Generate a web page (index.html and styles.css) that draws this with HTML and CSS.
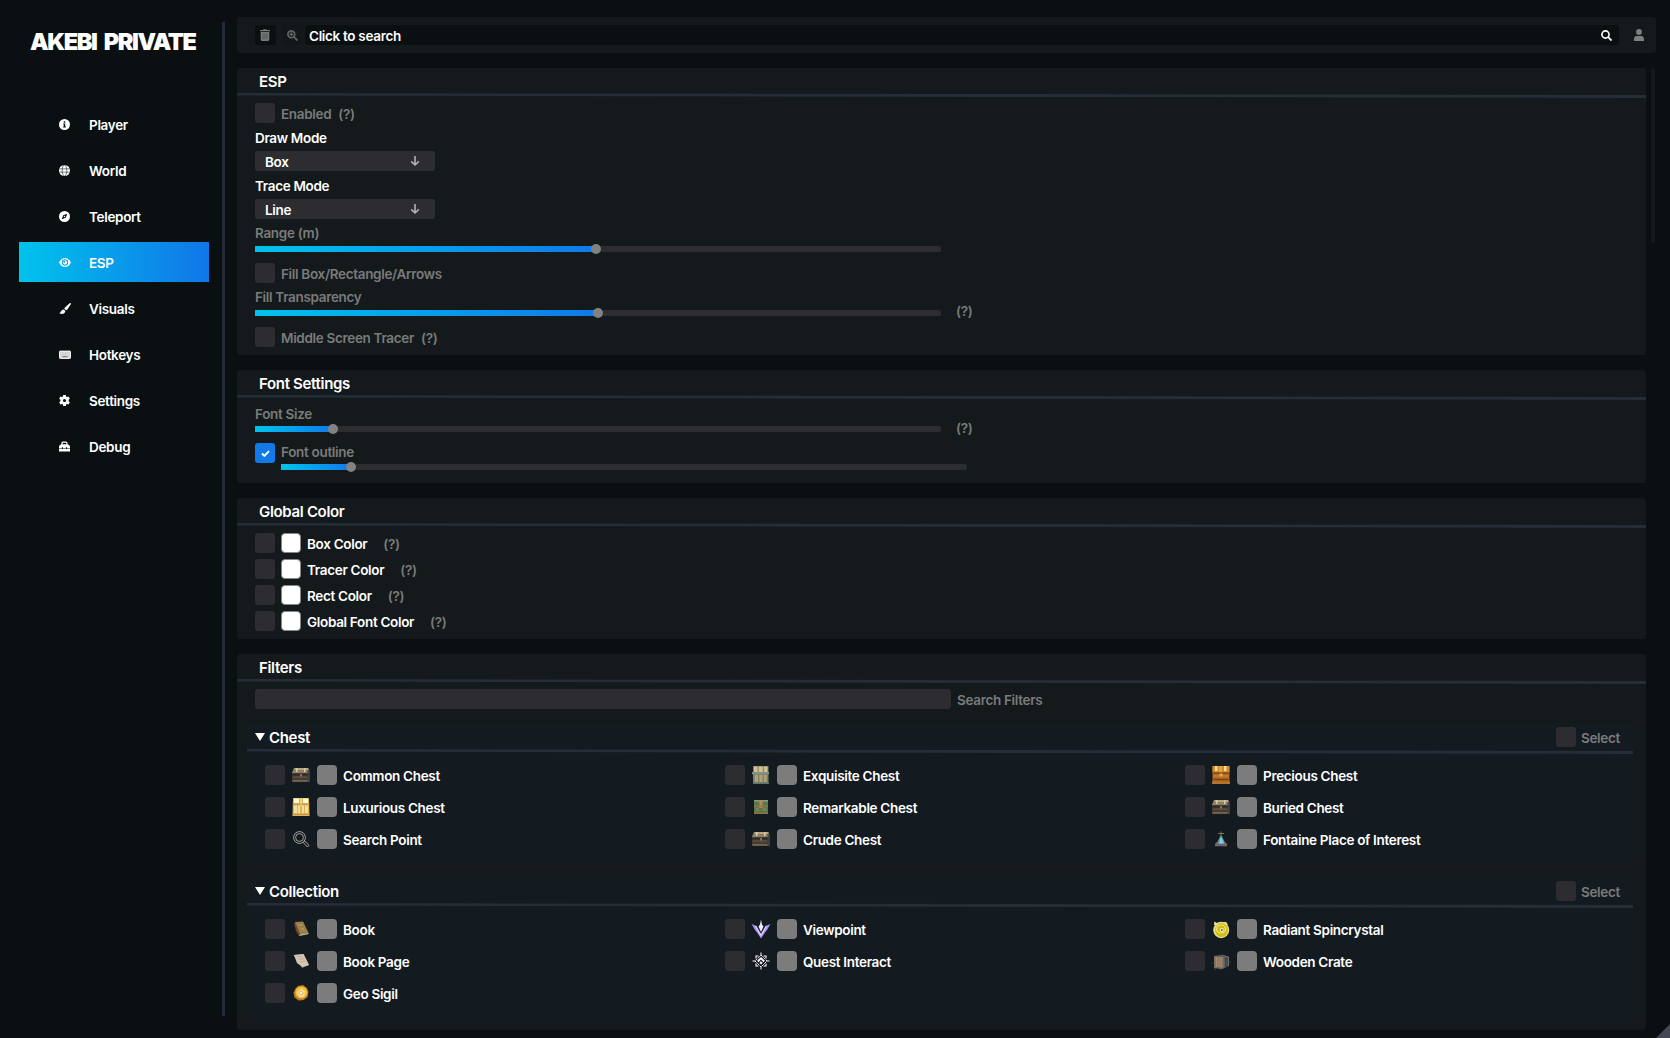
FILE: index.html
```html
<!DOCTYPE html>
<html lang="en">
<head>
<meta charset="utf-8">
<title>Akebi Private</title>
<link rel="stylesheet" href="styles.css">
</head>
<body>
<svg class="defs" width="0" height="0" aria-hidden="true">
  <defs>
    <symbol id="i-chest" viewBox="0 0 20 20">
      <path d="M1 7l2-4h15l1 4v10H1z" fill="#443d34"/>
      <path d="M1 8l2-5h14.500l1 5z" fill="#8f8062"/>
      <path d="M4 3h13v2H3.500z" fill="#b5a684"/>
      <path d="M5 3h1.500v4H5zM13 3h1.500v4H13z" fill="#d8cba9"/>
      <path d="M1 9h18v1.500H1z" fill="#2c2a29"/>
      <path d="M2 11h14v2H2z" fill="#554a3d"/>
      <path d="M1.500 15h16v1.800h-16z" fill="#77644d"/>
      <path d="M9 9h2v2.500H9z" fill="#85745a"/>
      <path d="M16.500 5l2 1 .5 10.500h-2.500z" fill="#3b4144"/>
    </symbol>
    <symbol id="i-down" viewBox="0 0 10 12"><path d="M5 1v9M1.200 6.400L5 10l3.800-3.600" fill="none" stroke="#b4b4b6" stroke-width="1.600"/></symbol>
  </defs>
</svg>
<div class="app">
  <aside class="sidebar">
    <h1 class="brand">AKEBI PRIVATE</h1>
    <nav class="nav">
      <a class="nav-item"><svg viewBox="0 0 12 12"><circle cx="6" cy="6" r="6" fill="#fff"/><path d="M5.200 2.500h1.600V4H5.200zM4.600 5h2.200v3.200h.7V9.300h-3V8.200h.7V6h-.6z" fill="#0a0f11"/></svg><span>Player</span></a>
      <a class="nav-item"><svg viewBox="0 0 12 12"><circle cx="6" cy="6" r="6" fill="#fff"/><path d="M.3 4.200h11.400M.3 7.800h11.400" stroke="#0a0f11" stroke-width=".6"/><ellipse cx="6" cy="6" rx="2.500" ry="6" fill="none" stroke="#0a0f11" stroke-width=".6"/></svg><span>World</span></a>
      <a class="nav-item"><svg viewBox="0 0 12 12"><circle cx="6" cy="6" r="6" fill="#fff"/><path d="M9 3L7.400 7.400 3 9l1.600-4.400z" fill="#0a0f11"/><circle cx="6" cy="6" r=".8" fill="#fff"/></svg><span>Teleport</span></a>
      <a class="nav-item active"><svg class="wide" viewBox="0 0 13 12"><path d="M0 6C1.600 2.700 3.900 1 6.500 1S11.400 2.700 13 6c-1.600 3.300-3.900 5-6.500 5S1.600 9.300 0 6z" fill="#fff"/><circle cx="6.500" cy="6" r="2.900" fill="none" stroke="#08a0e9" stroke-width="1.100"/><circle cx="5.800" cy="5.200" r="1" fill="#08a0e9"/></svg><span>ESP</span></a>
      <a class="nav-item"><svg class="wide" viewBox="0 0 13 12"><path d="M12.700.1c.5.500.2 1.200-.2 1.900L8.800 7.300 7.500 8 5.700 6.400l.5-1.300L11.300.5c.5-.4 1-.7 1.400-.4zM5 7l1.900 1.800C6.700 10.900 5 12 3 12 1.800 12 .7 11.600.2 11 2 10.900 1.800 7.200 5 7z" fill="#fff"/></svg><span>Visuals</span></a>
      <a class="nav-item"><svg class="wide" viewBox="0 0 13 12"><rect x=".5" y="2.300" width="12" height="8" rx=".7" fill="#d4d4d4" stroke="#fff"/><path d="M4 8.300h5" stroke="#808080" stroke-width="1.300"/></svg><span>Hotkeys</span></a>
      <a class="nav-item"><svg viewBox="0 0 12 12"><path d="M4.600 0h2.800l.3 1.700 1 .6 1.700-.6 1.400 2.300L10.500 5.200v1.600L11.800 8l-1.400 2.300-1.700-.6-1 .6L7.400 12H4.600l-.3-1.700-1-.6-1.700.6L.2 8l1.300-1.200V5.200L.2 4l1.400-2.300 1.700.6 1-.6z" fill="#fff"/><circle cx="6" cy="6" r="1.700" fill="#0a0f11"/></svg><span>Settings</span></a>
      <a class="nav-item"><svg viewBox="0 0 12 12"><path d="M3.300 4V2.300C3.300 1.500 4 1.200 4.600 1.200h2.800c.7 0 1.300.3 1.300 1.100V4" fill="none" stroke="#fff" stroke-width="1.300"/><path d="M0 7.500V5.500L2.200 3.600h7.600L12 5.500v2zM0 8.200h12v3.300H0z" fill="#fff"/><path d="M3.200 6.900h1.200v1.800H3.200zM7.600 6.900h1.200v1.800H7.600z" fill="#0a0f11"/></svg><span>Debug</span></a>
    </nav>
  </aside>
  <div class="divider"></div>
  <main class="main">
    <header class="topbar">
      <button class="tool dark"><svg viewBox="0 0 10 12"><path d="M0 1h3L3.500.2h3L7 1h3v1.300H0zM.7 3h8.600v7.800c0 .7-.5 1.200-1.200 1.200H1.900C1.200 12 .7 11.500.7 10.800z" fill="#77797a"/><path d="M3 4.300v6M5 4.300v6M7 4.300v6" stroke="#3a3e40" stroke-width=".6"/></svg></button>
      <button class="tool"><svg class="lens" viewBox="0 0 12 12"><path d="M7.500 7.500l3.900 3.900" stroke="#5f6263" stroke-width="2"/><circle cx="4.700" cy="4.700" r="3.800" fill="#222628" stroke="#5f6263" stroke-width="1.800"/><path d="M4.700 2.800v3.800M2.800 4.700h3.800" stroke="#6c6f70"/></svg></button>
      <div class="search"><span>Click to search</span><svg viewBox="0 0 12 12"><circle cx="4.900" cy="4.900" r="3.900" fill="none" stroke="#fff" stroke-width="1.800"/><path d="M7.600 7.600l3.900 3.900" stroke="#fff" stroke-width="2"/></svg></div>
      <svg class="user" viewBox="0 0 10 12"><circle cx="5" cy="3" r="2.900" fill="#7d7f80"/><path d="M0 12V9.700C0 8 1.200 6.900 2.800 6.900h4.400C8.800 6.900 10 8 10 9.700V12z" fill="#7d7f80"/></svg>
    </header>
    <div class="scroll">
      <div class="panels">
        <section class="panel">
          <h2 class="head">ESP</h2>
          <div class="body">
            <div class="row"><i class="check"></i><span class="dim">Enabled</span><span class="dim hint near">(?)</span></div>
            <div class="row"><span>Draw Mode</span></div>
            <div class="select"><span>Box</span><svg><use href="#i-down"/></svg></div>
            <div class="row"><span>Trace Mode</span></div>
            <div class="select"><span>Line</span><svg><use href="#i-down"/></svg></div>
            <div class="range"><label>Range (m)</label><div class="track"><div class="fill" style="width:341px"></div></div></div>
            <div class="row"><i class="check"></i><span class="dim">Fill Box/Rectangle/Arrows</span></div>
            <div class="range"><label>Fill Transparency</label><div class="track"><div class="fill" style="width:343px"></div></div><span class="dim range-hint">(?)</span></div>
            <div class="row"><i class="check"></i><span class="dim">Middle Screen Tracer</span><span class="dim hint near">(?)</span></div>
          </div>
        </section>
        <section class="panel">
          <h2 class="head">Font Settings</h2>
          <div class="body">
            <div class="range first"><label>Font Size</label><div class="track"><div class="fill" style="width:78px"></div></div><span class="dim range-hint">(?)</span></div>
            <div class="outline-row"><i class="check on"><svg viewBox="0 0 10 8"><path d="M1 4l2.700 2.700L9 1.300" fill="none" stroke="#fff" stroke-width="2.200"/></svg></i>
              <div class="range compact"><label>Font outline</label><div class="track"><div class="fill" style="width:70px"></div></div></div></div>
          </div>
        </section>
        <section class="panel">
          <h2 class="head">Global Color</h2>
          <div class="body colors">
            <div class="row"><i class="check"></i><i class="swatch white"></i><span>Box Color</span><span class="dim hint">(?)</span></div>
            <div class="row"><i class="check"></i><i class="swatch white"></i><span>Tracer Color</span><span class="dim hint">(?)</span></div>
            <div class="row"><i class="check"></i><i class="swatch white"></i><span>Rect Color</span><span class="dim hint">(?)</span></div>
            <div class="row"><i class="check"></i><i class="swatch white"></i><span>Global Font Color</span><span class="dim hint">(?)</span></div>
          </div>
        </section>
        <section class="panel">
          <h2 class="head">Filters</h2>
          <div class="body filters">
            <div class="row"><div class="input"></div><span class="dim">Search Filters</span></div>
            <section class="group">
              <h3 class="head"><i class="tri"></i><span>Chest</span><i class="check"></i><small>Select</small></h3>
              <div class="grid">
                <div class="item"><i class="check"></i><svg viewBox="0 0 20 20"><use href="#i-chest"/></svg><i class="swatch"></i><span>Common Chest</span></div>
                <div class="item"><i class="check"></i><svg viewBox="0 0 20 20"><path d="M2 1h15.500v18H2z" fill="#7c8468"/><path d="M3 1.500h13.500V7H3z" fill="#d0c193"/><path d="M6.500 1h1.200v6H6.500zM11.800 1H13v6h-1.200z" fill="#8c835f"/><path d="M1 7h17v2.300H1z" fill="#7d9389"/><path d="M4 10h3v7H4zM8.500 10h3v7h-3zM13 10h2.500v7H13z" fill="#b5a072"/><path d="M2 17.500h16V19H2z" fill="#5c776c"/></svg><i class="swatch"></i><span>Exquisite Chest</span></div>
                <div class="item"><i class="check"></i><svg viewBox="0 0 20 20"><path d="M1.500 1h17v18h-17z" fill="#a86220"/><path d="M1.500 1h17v6.500h-17z" fill="#cf8a30"/><path d="M4 1h2.500v5H4zM13 1h2.500v5H13z" fill="#ffdc92"/><path d="M8 1h3v6H8z" fill="#e3a243"/><path d="M1 7.500h18v1.200H1z" fill="#7a4314"/><path d="M2 9.500h16v3H2z" fill="#bf7928"/><path d="M8.500 8.500h3v3h-3z" fill="#eaa63c"/><path d="M3 14.500h14" stroke="#6f3d14"/><path d="M1 16.500h18V19H1z" fill="#b5742c"/></svg><i class="swatch"></i><span>Precious Chest</span></div>
                <div class="item"><i class="check"></i><svg viewBox="0 0 20 20"><path d="M2 1h16l.5 18h-17z" fill="#dfb55c"/><path d="M3 1.500h5V6H3zM12 1.500h5V6h-5z" fill="#fffbd0"/><path d="M9 1h2v8H9z" fill="#f3d777"/><path d="M3 8.500h3V16H3zM7 8.500h2V16H7zM11 8.500h2V16h-2zM14 8.500h3V16h-3z" fill="#f2df9b"/><path d="M1.500 7.200h17M1.500 17.500h17" stroke="#bd8c3f" stroke-width=".8"/></svg><i class="swatch"></i><span>Luxurious Chest</span></div>
                <div class="item"><i class="check"></i><svg viewBox="0 0 20 20"><path d="M3 3h14v14H3z" fill="#527c50"/><path d="M3 3h14v1.500H3z" fill="#8d9b75"/><path d="M8.500 3h3v8h-3z" fill="#c28157"/><path d="M3 9.200h14M3 16.400h14" stroke="#9a6f43" stroke-width="1.400"/><path d="M5 11h3v3H5zM12 11h3v3h-3z" fill="#7c8449"/></svg><i class="swatch"></i><span>Remarkable Chest</span></div>
                <div class="item"><i class="check"></i><svg viewBox="0 0 20 20"><use href="#i-chest"/></svg><i class="swatch"></i><span>Buried Chest</span></div>
                <div class="item"><i class="check"></i><svg viewBox="0 0 20 20" fill="none" stroke="#b5b0a8" stroke-width=".9"><circle cx="8.500" cy="8.500" r="5.900"/><circle cx="8.500" cy="8.500" r="3.900"/><path d="M12.200 13.500l1.500-1.500 4.300 4.300-1.600 1.700z"/></svg><i class="swatch"></i><span>Search Point</span></div>
                <div class="item"><i class="check"></i><svg viewBox="0 0 20 20"><use href="#i-chest"/></svg><i class="swatch"></i><span>Crude Chest</span></div>
                <div class="item"><i class="check"></i><svg viewBox="0 0 20 20"><path d="M10 5.500l5 10H5z" fill="#638f9b"/><path d="M10 7.500l3 7H8z" fill="#86cbdc"/><path d="M10 2.500v4M7 4.500h6" stroke="#7d754f"/><path d="M4.500 15.500L7 13.500M15.500 15.500L13 13.500M4 16.300h12" stroke="#7b6765" stroke-width="1.700"/></svg><i class="swatch"></i><span>Fontaine Place of Interest</span></div>
              </div>
            </section>
            <section class="group">
              <h3 class="head"><i class="tri"></i><span>Collection</span><i class="check"></i><small>Select</small></h3>
              <div class="grid">
                <div class="item"><i class="check"></i><svg viewBox="0 0 20 20"><path d="M3 4l2 8 3 5 9-1.500V14L12 3z" fill="#704a26"/><path d="M4 3l8-.5L17.500 14l-8 1.500z" fill="#98814a"/><path d="M8 17l9.500-2V14L9 15.500z" fill="#beb4a2"/><path d="M8 6h3M10 10h3" stroke="#b9a566"/></svg><i class="swatch"></i><span>Book</span></div>
                <div class="item"><i class="check"></i><svg viewBox="0 0 20 20"><path d="M.5 5l5 2 4.500 8 4.500-8 5-2-3.500 6-2 2.500L10 19.500 6 13.500 4 11z" fill="#a88ff0"/><path d="M4.500 7l5.500 9.500L15.500 7" fill="none" stroke="#d9ccff" stroke-width="1.300"/><path d="M10 .5l1 5 1.500 2L10 13 7.500 7.500 9 5.500z" fill="#f0eafa"/></svg><i class="swatch"></i><span>Viewpoint</span></div>
                <div class="item"><i class="check"></i><svg viewBox="0 0 20 20"><path d="M3 6l.3-3.500L6 4l6-.5 3-.8L17 6z" fill="#e9ddae"/><ellipse cx="10.200" cy="11" rx="8" ry="8.200" fill="#e8e288"/><ellipse cx="10.500" cy="11" rx="6.500" ry="7" fill="#d1bb20"/><ellipse cx="10" cy="10" rx="4.500" ry="4" fill="none" stroke="#f4e967" stroke-width="1.200"/><circle cx="10.800" cy="11" r="1.900" fill="#fbf8ca"/><circle cx="10.800" cy="11" r=".9" fill="#525232"/></svg><i class="swatch"></i><span>Radiant Spincrystal</span></div>
                <div class="item"><i class="check"></i><svg viewBox="0 0 20 20"><path d="M2.500 4l10-1L18 14l-7 3z" fill="#927e69"/><path d="M3 4l9.500-1L18 14l-6.500 2L6 12z" fill="#d4c7b1"/><path d="M6 6l5-.7M7.500 8.500l6-.8M9 11l6-1" stroke="#b3a48c" stroke-width=".7"/></svg><i class="swatch"></i><span>Book Page</span></div>
                <div class="item"><i class="check"></i><svg viewBox="0 0 20 20" fill="none" stroke="#fff"><path d="M10 1.500v3M10 15.500v3M1.500 10h3M15.500 10h3"/><path d="M10 4l6 6-6 6-6-6z" stroke-dasharray="2.500 .8" stroke-width=".9"/><path d="M5 7.500V5h2.500M12.500 5H15v2.500M15 12.500V15h-2.500M7.500 15H5v-2.500" stroke-width="1.100"/><path d="M6.800 10.500L10 7.200l3.200 3.300" stroke-width="1.800"/><path d="M10 10.500l1.300 1.300L10 13.200l-1.300-1.400z" fill="#fff" stroke-width=".5"/></svg><i class="swatch"></i><span>Quest Interact</span></div>
                <div class="item"><i class="check"></i><svg viewBox="0 0 20 20"><path d="M3 5l9-1 6 2v9l-6 3-9-1z" fill="#444b4f"/><path d="M3 6h9.500v11L3.500 16z" fill="#8b7560"/><path d="M5.500 6v10M8 6v10.500M10.300 6v10.500" stroke="#a38b70"/><path d="M3 5.500l9.500-.8L17.500 6M3 16.500l9 1M13 5.500V17M17.500 6v9" fill="none" stroke="#767a74" stroke-width=".9"/><path d="M.5 12h2M18 11h2M4 17v2M9 17.500V19" stroke="#3d4647"/></svg><i class="swatch"></i><span>Wooden Crate</span></div>
                <div class="item"><i class="check"></i><svg viewBox="0 0 20 20"><path d="M7 3l5-1 4 3 1.500 4-1 5-4 3-5 .5-4-3-1-5 2-4z" fill="#bd7d1d"/><circle cx="10.300" cy="9.500" r="5.900" fill="#f0c040"/><path d="M10 5.500l4 3-1 5-4.500.5-2.300-4z" fill="#f5dfa2"/><circle cx="10" cy="10" r="1.800" fill="#fff1c9" stroke="#d9a14a" stroke-width=".7"/></svg><i class="swatch"></i><span>Geo Sigil</span></div>
              </div>
            </section>
          </div>
        </section>
      </div>
      <div class="scrollbar"></div>
    </div>
  </main>
  <div class="grip"></div>
</div>
</body>
</html>
```
FILE: styles.css
```css
* { box-sizing: border-box; }
body {
  margin: 0;
  background: #0a0f11;
  color: #fff;
  font: 600 13.5px/20px Inter, "Liberation Sans", sans-serif;
  letter-spacing: -.32px;
}
svg { display: block; flex: none; }
h1, h2, h3 { margin: 0; font-weight: 600; }
.defs { position: absolute; }
.app { position: relative; display: flex; width: 1670px; height: 1038px; overflow: hidden; }

.sidebar { width: 222px; padding: 22px 13px 0 19px; }
.brand {
  height: 40px;
  padding-left: 11px;
  font-size: 23.500px;
  line-height: 40px;
  font-weight: 900;
  letter-spacing: -1.400px;
  word-spacing: 4px;
  white-space: nowrap;
}
.nav { display: flex; flex-direction: column; gap: 6px; margin-top: 42px; }
.nav-item { display: flex; align-items: center; gap: 19px; height: 40px; padding: 1px 0 0 40px; }
.nav-item svg { width: 11px; height: 11px; }
.nav-item .wide { width: 12px; height: 11px; margin-right: -1px; }
.nav-item span, .row span, .select span, .item span, .search span { padding-top: 1.500px; }
.active { background: linear-gradient(90deg, #00c3ec, #1176e8); }
.divider { width: 3px; height: 994px; margin-top: 22px; background: #242a36; }

.main { flex: 1; padding: 17px 14px 0 12px; }
.topbar { display: flex; align-items: center; height: 36px; padding: 0 12px 0 18px; border-radius: 3px; background: #14191b; }
.tool {
  display: flex; align-items: center; justify-content: center;
  width: 21px; height: 20px; margin-right: 6px; padding: 0;
  border: 0; border-radius: 3px; background: #121719;
}
.tool + .tool { margin-right: 2px; }
.dark { background: #0a0f11; padding-right: 1px; }
.tool svg { width: 10px; height: 12px; }
.tool .lens { width: 11px; height: 11px; }
.search {
  display: flex; flex: 1; align-items: center; justify-content: space-between;
  height: 20px; padding: 0 7px 0 4px; border-radius: 3px; background: #0a0f11;
}
.search svg { width: 11px; height: 11px; }
.user { width: 10px; height: 12px; margin-left: 15px; }

.scroll { display: flex; gap: 5px; margin-top: 15px; }
.panels { display: flex; flex-direction: column; gap: 15px; width: 1409px; }
.scrollbar { width: 4px; height: 175px; border-radius: 2px; background: #14191b; }
.panel { border-radius: 3px; background: #14191b; }
.head {
  position: relative;
  display: flex; align-items: center;
  height: 28px; padding: 0 0 0 22px;
  font-size: 15px;
}
.head::after {
  content: "";
  position: absolute; left: 0; right: 0; bottom: -2px; height: 5px;
  background: #262d39;
  clip-path: polygon(0 0, 100% 40%, 100% 100%, 0 50%);
}
.body { display: flex; flex-direction: column; gap: 4px; padding: 7px 12px 8px 18px; }
.row { display: flex; align-items: center; height: 20px; gap: 6px; white-space: nowrap; }
.dim, .range label, small { color: #7a7b7c; }
.check { flex: none; width: 20px; height: 20px; border-radius: 3px; background: #2c2c31; }
.on { display: flex; align-items: center; justify-content: center; background: #1179e8; }
.on svg { width: 9px; height: 7px; }
.hint { margin-left: 10px; }
.near { margin-left: 1px; }
.select {
  display: flex; align-items: center; justify-content: space-between;
  width: 180px; height: 20px; padding: 0 15px 0 10px;
  border-radius: 2px; background: #2c2c31;
}
.select svg { width: 10px; height: 12px; }
.range { position: relative; width: 686px; height: 36px; }
.range label { display: block; height: 23px; line-height: 21px; }
.range.first { height: 34px; }
.range.first label { height: 21px; line-height: 18px; }
.range.compact { height: 32px; }
.range.compact label { height: 21px; line-height: 18px; }
.track { height: 6px; border-radius: 0 2px 2px 0; background: #2c2c31; }
.fill { position: relative; height: 6px; background: linear-gradient(90deg, #00c3ec, #1179e8); }
.fill::after {
  content: "";
  position: absolute; right: -5px; top: -2px;
  width: 10px; height: 10px; border-radius: 50%; background: #828282;
}
.range-hint { position: absolute; left: 701px; bottom: 2px; }
.first .range-hint { bottom: 1px; }
.outline-row { display: flex; gap: 6px; height: 32px; }
.colors { gap: 6px; }
.swatch { flex: none; width: 20px; height: 20px; border-radius: 4px; background: #7c7c7c; }
.white { border: 1px solid #858585; background: #fff; }

.filters { padding-bottom: 13px; gap: 15px; }
.input { width: 696px; height: 20px; border-radius: 3px; background: #2c2c31; }
.group { width: 1386px; height: 139px; margin-left: -8px; border-radius: 3px; background: #131a20; }
.group .head { height: 28px; padding: 0 12px 0 8px; }
.tri { width: 10px; height: 8px; margin: -2px 4px 0 0; background: #fff; clip-path: polygon(0 0, 100% 0, 50% 100%); }
.head .check { margin-left: auto; margin-top: -2px; }
.head small { width: 40px; margin-left: 5px; font-size: 13.500px; }
.grid { display: grid; grid-template-columns: repeat(3, 460px); row-gap: 12px; padding: 13px 0 0 18px; }
.item { display: flex; align-items: center; height: 20px; gap: 6px; }
.item svg { width: 20px; height: 20px; }
.grip { position: absolute; right: 0; bottom: 0; width: 14px; height: 14px; background: #454754; clip-path: polygon(100% 0, 100% 100%, 0 100%); }
```
